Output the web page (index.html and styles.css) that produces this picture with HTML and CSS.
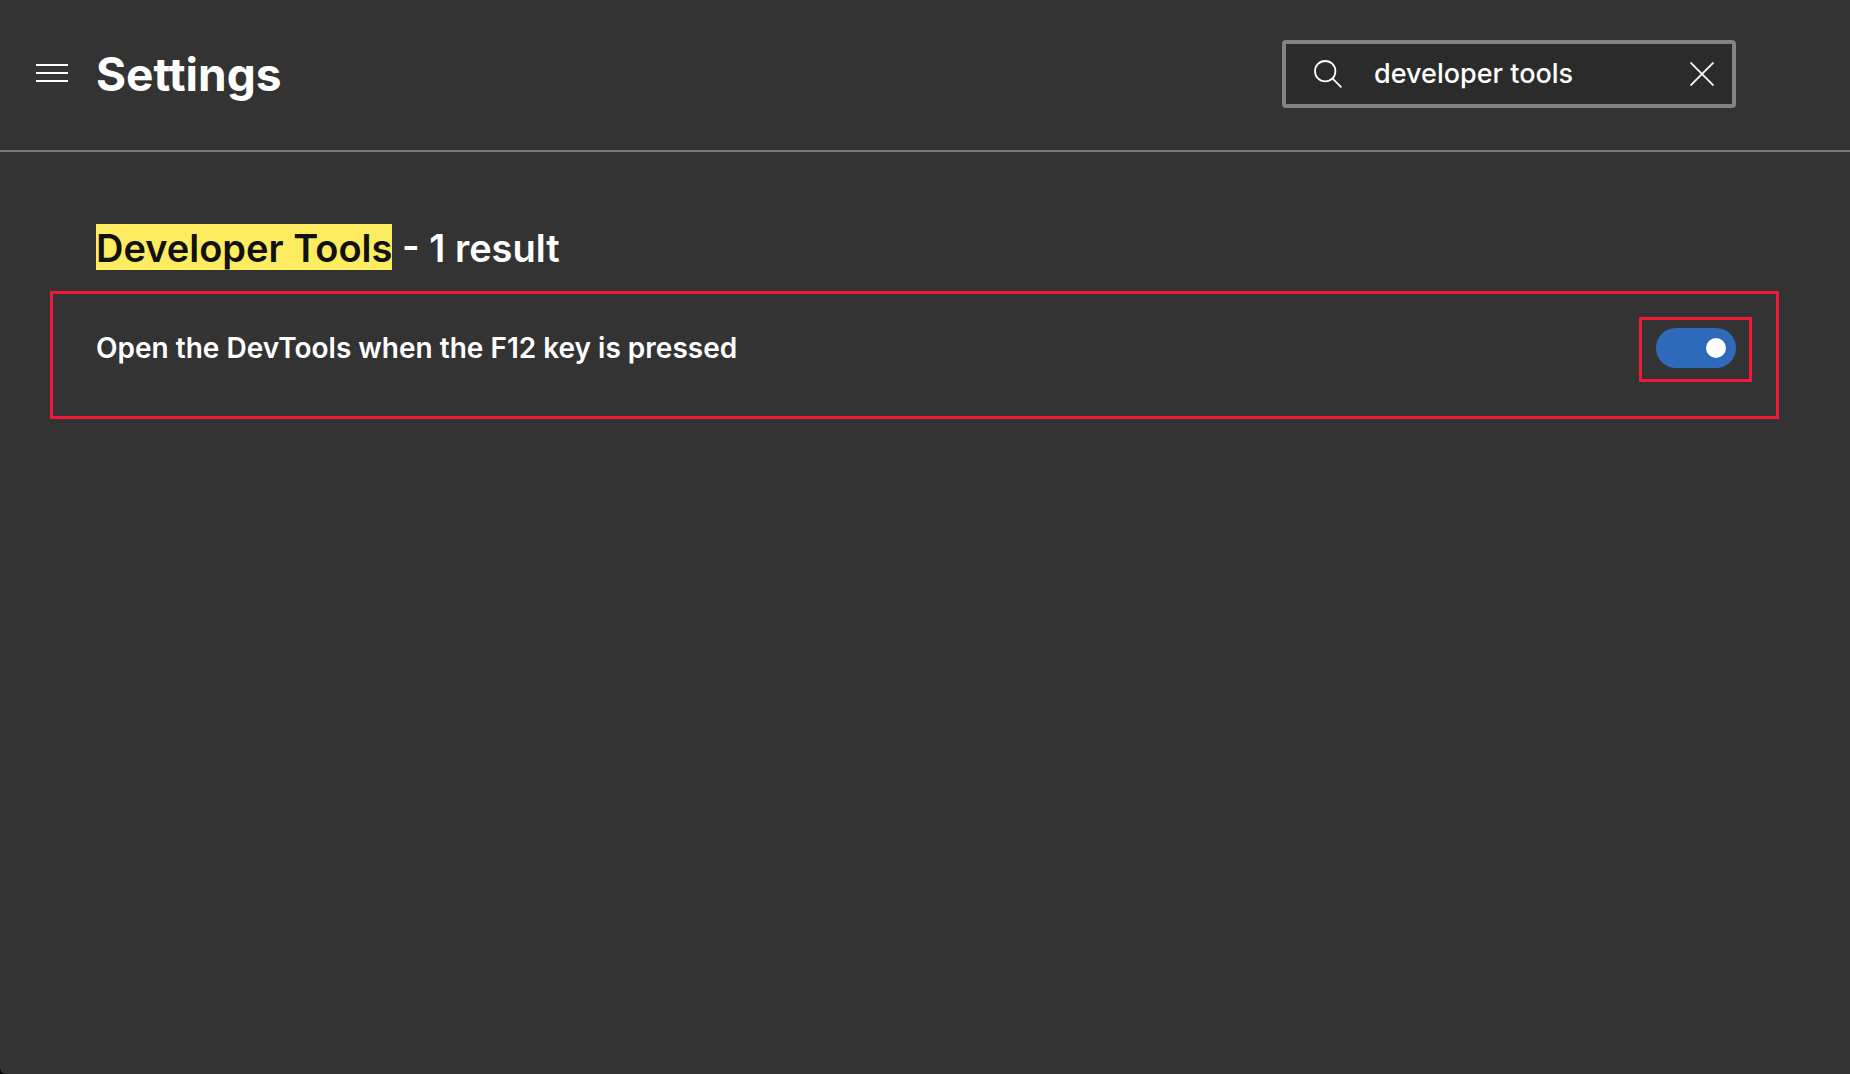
FILE: index.html
```html
<!DOCTYPE html>
<html lang="en">
<head>
<meta charset="utf-8">
<meta name="viewport" content="width=device-width, initial-scale=1">
<title>Settings</title>
<link rel="stylesheet" href="styles.css">
</head>
<body>
<header class="header">
  <button class="icon-button menu" type="button" aria-label="Settings menu">
    <svg width="32" height="20" viewBox="0 0 32 20" fill="#fff" aria-hidden="true"><path d="M0 0h32v2H0zM0 8h32v2H0zM0 16h32v2H0z"/></svg>
  </button>
  <h1 class="title">Settings</h1>
  <form class="search" role="search">
    <svg class="search-icon" width="28" height="28" viewBox="0 0 28 28" fill="none" stroke="#fff" stroke-width="1.8" aria-hidden="true"><circle cx="11.2" cy="11.2" r="10.2"/><path d="M18.4 18.4l9 9"/></svg>
    <input class="search-input" type="text" aria-label="Search settings" value="developer tools">
    <button class="icon-button" type="button" aria-label="Clear search">
      <svg width="24" height="24" viewBox="0 0 24 24" fill="none" stroke="#fff" stroke-width="1.8" aria-hidden="true"><path d="M.5.5l23 23M23.5.5l-23 23"/></svg>
    </button>
  </form>
</header>
<main class="content">
  <h2 class="results"><mark class="match">Developer Tools</mark> - 1 result</h2>
  <section class="setting">
    <label class="setting-label" for="f12">Open the DevTools when the F12 key is pressed</label>
    <div class="toggle-frame">
      <input class="toggle" id="f12" type="checkbox" role="switch" checked>
    </div>
  </section>
</main>
</body>
</html>
```
FILE: styles.css
```css
* {
  box-sizing: border-box;
}

html {
  background: #000;
}

body {
  margin: 0;
  min-height: 100vh;
  background: #333;
  border-bottom-left-radius: 6px;
  color: #fff;
  font-family: Inter, "Liberation Sans", sans-serif;
}

.header {
  display: flex;
  align-items: center;
  height: 152px;
  padding: 0 114px 2px 36px;
  border-bottom: 2px solid #767676;
}

.icon-button {
  display: flex;
  padding: 0;
  border: 0;
  background: none;
  cursor: pointer;
}

.title {
  margin: 0 auto 0 28px;
  font-size: 46px;
  font-weight: 700;
  line-height: 60px;
}

.search {
  display: flex;
  align-items: center;
  width: 454px;
  height: 68px;
  padding: 0 18px 0 28px;
  border: 4px solid #838383;
  border-radius: 4px;
  background: #2b2b2b;
}

.search-icon {
  flex: none;
}

.search-input {
  flex: 1;
  min-width: 0;
  margin-left: 32px;
  padding: 0;
  border: 0;
  outline: 0;
  background: none;
  color: #fff;
  font: 500 27px/36px Inter, "Liberation Sans", sans-serif;
}

.content {
  padding: 72px 71px 72px 50px;
}

.results {
  margin: 0 0 21px 46px;
  font-size: 38px;
  font-weight: 600;
  line-height: 44px;
}

.match {
  display: inline-block;
  padding-top: 2px;
  background: #fdec60;
  color: #111;
}

.setting {
  display: flex;
  align-items: flex-start;
  justify-content: space-between;
  min-height: 128px;
  padding: 23px 24px 23px 43px;
  border: 3px solid #f01a37;
}

.setting-label {
  padding-top: 13px;
  font-size: 28px;
  font-weight: 600;
  line-height: 36px;
}

.toggle-frame {
  display: flex;
  padding: 8px 13px 11px 14px;
  border: 3px solid #f01a37;
}

.toggle {
  display: flex;
  align-items: center;
  justify-content: flex-start;
  width: 80px;
  height: 40px;
  margin: 0;
  padding: 0 10px;
  border-radius: 20px;
  appearance: none;
  background: #767676;
  cursor: pointer;
}

.toggle::before {
  width: 20px;
  height: 20px;
  border-radius: 50%;
  background: #fff;
  content: "";
}

.toggle:checked {
  justify-content: flex-end;
  background: #2d6ab9;
}
```
